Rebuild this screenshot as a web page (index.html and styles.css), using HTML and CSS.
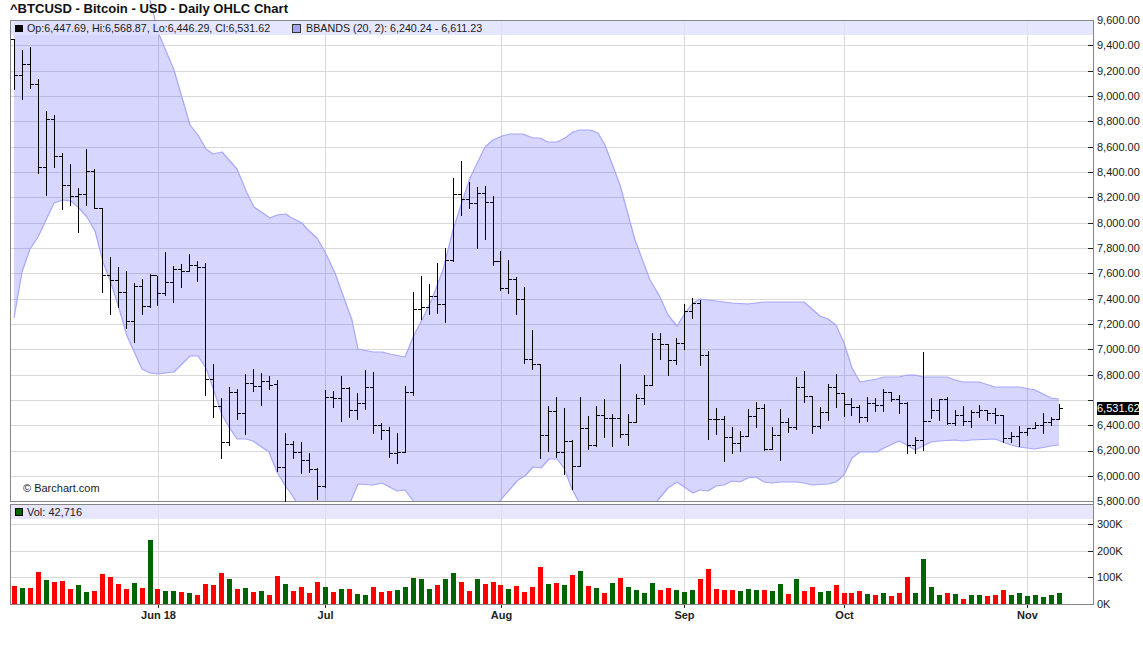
FILE: index.html
```html
<!DOCTYPE html>
<html lang="en">
<head>
<meta charset="utf-8">
<title>^BTCUSD - Bitcoin - USD - Daily OHLC Chart</title>
<link rel="stylesheet" href="styles.css">
</head>
<body>
<main class="page">
<svg class="chart" width="1143" height="645" viewBox="0 0 1143 645" xmlns="http://www.w3.org/2000/svg">
  <defs>
    <clipPath id="clip-fill"><rect x="11" y="20" width="1082" height="481"/></clipPath>
    <clipPath id="clip-line"><rect x="11" y="0" width="1082" height="501"/></clipPath>
  </defs>
  <g id="grid"></g>
  <path id="band-fill" class="band-fill" clip-path="url(#clip-fill)"/>
  <g id="band-lines" class="band-line" clip-path="url(#clip-line)"></g>
  <rect class="legend-strip" x="11" y="21" width="1082" height="14"/>
  <rect class="legend-strip" x="11" y="505" width="1082" height="14"/>
  <g id="frame"></g>
  <path id="stems" class="stems"/>
  <path id="ticks" class="stems"/>
  <g id="vol-up" class="vol-up"></g>
  <g id="vol-down" class="vol-down"></g>

  <text class="title" x="10" y="13">^BTCUSD - Bitcoin - USD - Daily OHLC Chart</text>

  <rect class="key-black" x="15" y="25" width="8" height="7"/>
  <text class="label-tight" x="27" y="32">Op:6,447.69, Hi:6,568.87, Lo:6,446.29, Cl:6,531.62</text>
  <rect class="key-band" x="292.5" y="24.5" width="8" height="8"/>
  <text class="label-tight" x="306" y="32">BBANDS (20, 2): 6,240.24 - 6,611.23</text>
  <text class="label" x="23" y="492">© Barchart.com</text>
  <rect class="key-vol" x="15.5" y="508.5" width="7" height="7"/>
  <text class="label" x="27" y="516">Vol: 42,716</text>

  <g class="label">
    <text x="1097" y="24">9,600.00</text>
    <text x="1097" y="49">9,400.00</text>
    <text x="1097" y="75">9,200.00</text>
    <text x="1097" y="100">9,000.00</text>
    <text x="1097" y="125">8,800.00</text>
    <text x="1097" y="151">8,600.00</text>
    <text x="1097" y="176">8,400.00</text>
    <text x="1097" y="201">8,200.00</text>
    <text x="1097" y="227">8,000.00</text>
    <text x="1097" y="252">7,800.00</text>
    <text x="1097" y="277">7,600.00</text>
    <text x="1097" y="303">7,400.00</text>
    <text x="1097" y="328">7,200.00</text>
    <text x="1097" y="353">7,000.00</text>
    <text x="1097" y="379">6,800.00</text>
    <text x="1097" y="429">6,400.00</text>
    <text x="1097" y="454">6,200.00</text>
    <text x="1097" y="480">6,000.00</text>
    <text x="1097" y="505">5,800.00</text>
    <text x="1097" y="528">300K</text>
    <text x="1097" y="555">200K</text>
    <text x="1097" y="581">100K</text>
    <text x="1097" y="608">0K</text>
  </g>
  <rect class="last-box" x="1097" y="402" width="42" height="13"/>
  <text class="last-text" x="1097" y="412">6,531.62</text>

  <g class="month">
    <text x="158.5" y="619">Jun 18</text>
    <text x="325.5" y="619">Jul</text>
    <text x="501.5" y="619">Aug</text>
    <text x="684.5" y="619">Sep</text>
    <text x="844.5" y="619">Oct</text>
    <text x="1027.5" y="619">Nov</text>
  </g>
</svg>
</main>
<script src="chart.js"></script>
</body>
</html>
```
FILE: styles.css
```css
html, body {
  margin: 0;
  padding: 0;
  background: #fff;
}
.page {
  width: 1143px;
  height: 645px;
  overflow: hidden;
}
.chart {
  display: block;
  font-family: "Liberation Sans", Arial, sans-serif;
}
.grid-line {
  stroke: #d9d9d9;
  stroke-width: 1;
  shape-rendering: crispEdges;
}
.frame-line {
  stroke: #858585;
  stroke-width: 1;
  shape-rendering: crispEdges;
}
.tick-line {
  stroke: #222;
  stroke-width: 1;
  shape-rendering: crispEdges;
}
.band-fill {
  fill: rgba(50, 50, 255, 0.2);
  stroke: none;
}
.band-line path {
  fill: none;
  stroke: #a6a6ff;
  stroke-width: 1.2;
  stroke-linejoin: round;
}
.legend-strip {
  fill: #e0e0ff;
  fill-opacity: 0.8;
}
.stems {
  fill: none;
  stroke: #000;
  stroke-width: 1;
  shape-rendering: crispEdges;
}
.vol-up rect {
  fill: #006400;
}
.vol-down rect {
  fill: #ff0000;
}
.title {
  font-size: 13.05px;
  font-weight: 700;
  fill: #111;
}
.label {
  font-size: 11px;
  fill: #1a1a1a;
}
.label-tight {
  font-size: 10.72px;
  fill: #1a1a1a;
}
.month {
  font-size: 11px;
  font-weight: 700;
  fill: #222;
  text-anchor: middle;
}
.key-black {
  fill: #000;
}
.key-band {
  fill: #a4a4f0;
  stroke: #333;
  stroke-width: 1;
  shape-rendering: crispEdges;
}
.key-vol {
  fill: #006400;
  stroke: #000;
  stroke-width: 1;
  shape-rendering: crispEdges;
}
.last-box {
  fill: #000;
}
.last-text {
  font-size: 11px;
  fill: #fff;
}
```
FILE: chart.js
```js
(function () {
  var NS = 'http://www.w3.org/2000/svg';
  // each bar: high y, low y, open y, close y (pixel rows on the price axis)
  var bars = [
    [39,89,39,75],[50,99,75,64],[47,88,64,84],[79,173,84,167],[111,195,167,119],[115,167,119,156],
    [153,209,156,185],[164,205,185,196],[188,232,196,194],[149,205,194,171],[169,208,171,208],
    [208,292,208,275],[257,314,275,280],[267,307,280,292],[271,328,292,321],[283,342,321,286],
    [279,314,286,306],[274,307,306,275],[276,305,275,293],[252,295,293,282],[266,302,282,269],
    [264,287,269,271],[254,271,271,265],[261,281,265,267],[263,395,267,379],[364,417,379,406],
    [398,458,406,442],[387,445,442,392],[389,419,392,413],[374,434,413,383],[369,391,383,386],
    [373,405,386,381],[376,389,381,385],[380,471,384,467],[433,501,467,444],[441,458,444,452],
    [442,473,452,460],[453,472,460,469],[468,499,469,486],[390,487,486,397],[391,407,397,398],
    [376,421,398,388],[387,417,388,410],[393,419,410,403],[370,409,403,387],[372,433,387,425],
    [423,439,425,430],[427,457,430,453],[433,463,453,452],[386,452,452,392],[292,395,392,309],
    [276,319,309,307],[284,314,307,296],[263,313,296,304],[248,322,304,260],[178,261,260,194],
    [161,215,194,199],[182,208,199,203],[187,248,203,193],[186,239,193,202],[196,265,202,261],
    [251,290,261,288],[260,293,288,279],[277,314,279,299],[287,363,299,359],[330,369,359,364],
    [364,458,364,435],[406,451,435,411],[397,457,411,452],[408,474,452,441],[440,489,441,466],
    [397,466,466,428],[416,449,428,445],[406,446,445,415],[399,437,415,418],[414,446,418,418],
    [364,437,418,434],[414,445,434,422],[394,422,422,398],[375,404,398,385],[333,385,385,339],
    [333,359,339,344],[344,375,344,360],[338,364,360,343],[304,349,343,311],[298,318,311,303],
    [300,365,303,355],[351,439,355,419],[408,434,419,419],[416,461,419,437],[427,453,437,443],
    [431,451,443,436],[409,436,436,416],[402,427,416,408],[404,450,408,449],[427,449,449,435],
    [409,460,435,422],[418,432,422,427],[377,429,427,387],[371,402,387,396],[396,433,396,426],
    [407,428,426,412],[384,420,412,387],[374,407,387,393],[393,416,393,404],[398,415,404,407],
    [405,422,407,417],[397,421,417,403],[398,411,403,405],[389,411,405,392],[392,401,392,399],
    [395,413,399,403],[402,453,403,445],[437,453,445,440],[352,450,440,421],[398,418,421,410],
    [399,420,410,399],[397,424,399,423],[410,425,423,415],[406,425,415,421],[410,427,421,412],
    [405,417,412,410],[410,420,410,413],[408,423,413,415],[415,442,415,438],[432,442,438,436],
    [426,446,436,432],[428,435,432,428],[422,428,428,425],[413,433,425,422],[417,425,422,419],
    [404,419,419,408]
  ];
  // volume bars: colour flag and top in 3x zoom rows (baseline row 343)
  var vol = 'r288 g294 r294 r246 g270 r276 r273 r297 g285 g306 r303 r252 r261 r282 r297 g279 r294 g150 r297 g303 g303 r306 g309 r315 r282 r285 r249 g267 r297 g294 r306 g303 r315 r258 g282 ' +
            'r303 r291 r309 r276 g291 r306 g297 r297 g312 g315 r291 r306 r303 g300 g291 g264 g267 g297 r285 g267 g249 r276 r303 g267 r282 r276 r285 g297 r288 r306 r291 r231 g282 r279 g285 r255 g243 ' +
            'r288 g294 r309 g279 r264 g291 g300 g309 g279 r300 r294 g300 g306 g300 r267 r237 r297 r300 r300 g303 g297 g300 r300 g303 g282 r312 g267 r303 r291 g306 g303 r285 r309 r309 r303 ' +
            'g312 r315 g309 r318 r309 r261 g309 g207 g291 g315 r309 g312 r327 g315 g315 r318 r315 r300 g315 g309 g318 g315 g321 g315 g309';
  var upper = [[14,-420],[120,-60],[142,-20],[150,0],[158,32],[174,70],[190,125],[198,135],[206,149],[213,154],[222,152],[237,169],[247,193],[254,207],[270,218],[277,215],[286,214],[290,217],[302,223],[307,229],[317,238],[325,252],[335,273],[344,298],[352,320],[358,349],[373,352],[382,352],[390,354],[405,357],[414,335],[423,318],[432,299],[443,270],[453,230],[462,202],[470,178],[485,147],[493,140],[502,136],[510,134],[523,134],[533,138],[540,138],[548,142],[557,142],[565,138],[573,132],[580,130],[590,130],[598,133],[605,145],[620,185],[635,240],[650,280],[660,297],[668,315],[677,326],[685,313],[693,303],[700,299],[716,301],[732,303],[748,304],[764,302],[780,302],[797,302],[804,302],[812,309],[820,316],[828,319],[836,325],[844,343],[852,368],[860,382],[877,379],[884,377],[899,377],[907,375],[915,375],[923,377],[939,377],[947,377],[955,380],[963,382],[979,382],[995,387],[1003,387],[1019,387],[1035,390],[1043,394],[1051,398],[1059,399]];
  var lower = [[14,318],[22,272],[30,249],[38,237],[54,203],[63,200],[71,201],[79,208],[87,217],[95,231],[103,262],[111,283],[118,305],[127,336],[142,369],[150,373],[158,374],[174,372],[190,356],[198,356],[206,368],[213,388],[222,415],[229,427],[237,439],[246,439],[253,441],[269,452],[277,472],[286,487],[290,492],[297,503],[305,520],[342,520],[350,503],[358,484],[373,485],[382,483],[397,491],[405,490],[415,503],[423,520],[490,520],[498,503],[518,480],[525,476],[533,467],[541,468],[549,459],[557,459],[564,468],[572,489],[579,502],[587,520],[645,520],[658,500],[668,488],[677,482],[693,493],[700,490],[708,491],[716,486],[724,485],[732,481],[740,482],[748,478],[756,477],[764,482],[772,483],[780,482],[797,482],[804,483],[812,485],[828,484],[836,482],[844,475],[852,458],[860,452],[877,452],[884,448],[899,441],[907,445],[915,450],[923,446],[931,442],[939,441],[955,440],[963,441],[971,440],[995,439],[1003,442],[1011,445],[1019,447],[1035,449],[1051,446],[1059,445]];

  function el(name, attrs, parent) {
    var n = document.createElementNS(NS, name);
    for (var k in attrs) n.setAttribute(k, attrs[k]);
    parent.appendChild(n);
    return n;
  }
  function line(x1, y1, x2, y2, cls, parent) {
    el('line', { x1: x1, y1: y1, x2: x2, y2: y2, 'class': cls }, parent);
  }
  function col(i) { return Math.round(13.9 + 7.977 * i); }
  function pts(list) { return list.map(function (p) { return p[0] + ',' + p[1]; }).join(' L'); }

  var grid = document.getElementById('grid');
  var frame = document.getElementById('frame');
  var priceY = [20, 45, 71, 96, 121, 147, 172, 197, 223, 248, 273, 299, 324, 349, 375, 400, 425, 451, 476, 501];
  var volY = [524, 551, 577];
  var monthX = [158, 325, 501, 684, 844, 1027];

  priceY.forEach(function (y) {
    if (y > 20 && y < 501) line(11, y + .5, 1093, y + .5, 'grid-line', grid);
    line(1088, y + .5, 1093, y + .5, 'tick-line', frame);
  });
  volY.forEach(function (y) {
    line(11, y + .5, 1093, y + .5, 'grid-line', grid);
    line(1088, y + .5, 1093, y + .5, 'tick-line', frame);
  });
  line(1088, 604.5, 1093, 604.5, 'tick-line', frame);
  monthX.forEach(function (x) {
    line(x + .5, 21, x + .5, 501, 'grid-line', grid);
    line(x + .5, 505, x + .5, 604, 'grid-line', grid);
    line(x + .5, 604, x + .5, 608, 'tick-line', frame);
  });

  // panel frames
  line(10.5, 20, 10.5, 502, 'frame-line', frame);
  line(10.5, 504, 10.5, 605, 'frame-line', frame);
  line(1093.5, 20, 1093.5, 605, 'frame-line', frame);
  line(10, 20.5, 1094, 20.5, 'frame-line', frame);
  line(10, 501.5, 1094, 501.5, 'frame-line', frame);
  line(10, 504.5, 1094, 504.5, 'frame-line', frame);
  line(10, 604.5, 1094, 604.5, 'frame-line', frame);

  // Bollinger band
  var rev = lower.slice().reverse();
  document.getElementById('band-fill').setAttribute('d', 'M' + pts(upper) + ' L' + pts(rev) + ' Z');
  var lines = document.getElementById('band-lines');
  el('path', { d: 'M' + pts(upper) }, lines);
  el('path', { d: 'M' + pts(lower) }, lines);

  // OHLC bars
  var s = '', t = '';
  bars.forEach(function (b, i) {
    var x = col(i) + .5;
    s += 'M' + x + ' ' + b[0] + 'V' + (b[1] + 1);
    t += 'M' + (x - 3.5) + ' ' + (b[2] + .5) + 'H' + (x - .5);
    t += 'M' + (x + .5) + ' ' + (b[3] + .5) + 'H' + (x + 3.5);
  });
  document.getElementById('stems').setAttribute('d', s);
  document.getElementById('ticks').setAttribute('d', t);

  // volume
  var up = document.getElementById('vol-up'), down = document.getElementById('vol-down');
  vol.split(' ').forEach(function (v, i) {
    var top = 490 + Math.round(parseInt(v.slice(1), 10) / 3);
    el('rect', { x: col(i) - 2, y: top, width: 5, height: 604 - top }, v[0] === 'g' ? up : down);
  });
})();
```
